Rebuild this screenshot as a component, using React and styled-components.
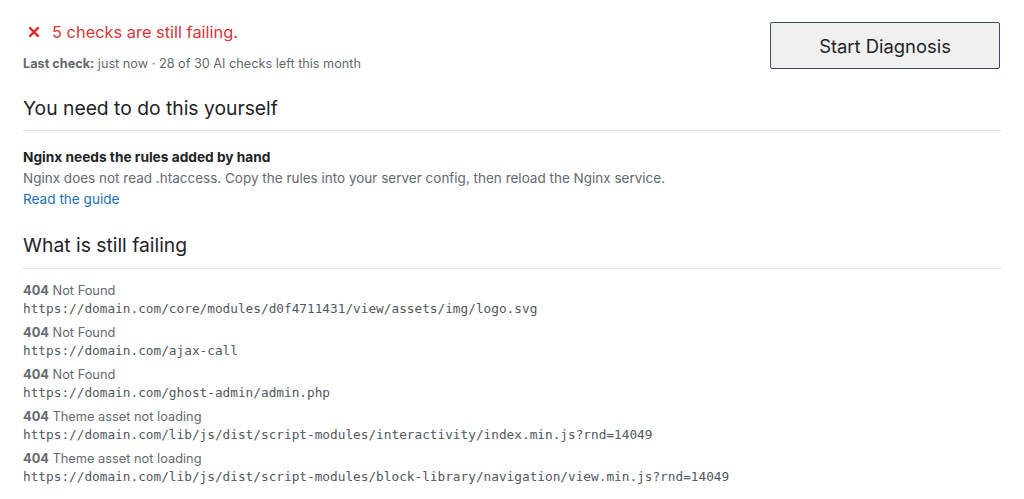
import React from "react";
import styled, { createGlobalStyle } from "styled-components";

const Global = createGlobalStyle`
  html, body { margin: 0; padding: 0; background: #fff; }
  body { font-family: Inter, "Liberation Sans", Arial, sans-serif; color: #1d2327; -webkit-font-smoothing: antialiased; }
`;

const Page = styled.div`
  padding: 21px 23px 0 23px;
  width: 978px;
`;

const Header = styled.div`
  display: flex;
  justify-content: space-between;
  align-items: flex-start;
`;

const StatusBlock = styled.div`
  display: flex;
  flex-direction: column;
`;

const StatusTitle = styled.div`
  display: flex;
  align-items: center;
  gap: 12px;
  color: #d63638;
  font-size: 16.4px;
  line-height: 22px;
  padding: 0 0 0 5px;
`;

const Meta = styled.div`
  margin-top: 13px;
  font-size: 12.7px;
  line-height: 16px;
  color: #646970;
  b { font-weight: 700; }
`;

const Button = styled.button`
  width: 230px;
  height: 47px;
  margin-top: 1px;
  margin-right: 1px;
  background: #f0f0f1;
  border: 1px solid #3c4a62;
  border-radius: 2px;
  font-family: inherit;
  font-size: 18.4px;
  color: #1d2327;
  cursor: pointer;
`;

const Section = styled.section`
  margin-top: ${(p) => p.$top}px;
`;

const SectionTitle = styled.h2`
  margin: 0;
  font-size: 19.3px;
  font-weight: 400;
  line-height: 24px;
  padding-bottom: ${(p) => p.$pad}px;
  border-bottom: 1px solid #e0e4ea;
`;

const Notice = styled.div`
  margin-top: 16px;
  font-size: 13.5px;
  line-height: 21px;
`;

const NoticeTitle = styled.div`
  font-size: 13.7px;
  font-weight: 700;
  color: #1d2327;
`;

const NoticeText = styled.div`
  color: #646970;
`;

const Link = styled.a`
  color: #2271b1;
  font-size: 13.6px;
  text-decoration: none;
`;

const List = styled.div`
  margin-top: 13px;
  display: flex;
  flex-direction: column;
  gap: 6px;
`;

const Item = styled.div`
  display: flex;
  flex-direction: column;
`;

const Label = styled.div`
  font-size: 12.8px;
  line-height: 18px;
  color: #646970;
  b { font-weight: 700; }
`;

const Url = styled.code`
  font-family: "DejaVu Sans Mono", "Liberation Mono", monospace;
  font-size: 12.75px;
  line-height: 18px;
  color: #50575e;
`;

const XIcon = () => (
  <svg width="12" height="12" viewBox="0 0 12 12">
    <path d="M1.4 1.4 L10.6 10.6 M10.6 1.4 L1.4 10.6" stroke="#d63638" strokeWidth="2.7" strokeLinecap="butt" />
  </svg>
);

const failures = [
  ["Not Found", "https://domain.com/core/modules/d0f4711431/view/assets/img/logo.svg"],
  ["Not Found", "https://domain.com/ajax-call"],
  ["Not Found", "https://domain.com/ghost-admin/admin.php"],
  ["Theme asset not loading", "https://domain.com/lib/js/dist/script-modules/interactivity/index.min.js?rnd=14049"],
  ["Theme asset not loading", "https://domain.com/lib/js/dist/script-modules/block-library/navigation/view.min.js?rnd=14049"],
];

export default function App() {
  return (
    <>
      <Global />
      <Page>
        <Header>
          <StatusBlock>
            <StatusTitle>
              <XIcon />
              <span>5 checks are still failing.</span>
            </StatusTitle>
            <Meta>
              <b>Last check:</b> just now · 28 of 30 AI checks left this month
            </Meta>
          </StatusBlock>
          <Button>Start Diagnosis</Button>
        </Header>

        <Section $top={24}>
          <SectionTitle $pad={10}>You need to do this yourself</SectionTitle>
          <Notice>
            <NoticeTitle>Nginx needs the rules added by hand</NoticeTitle>
            <NoticeText>
              Nginx does not read .htaccess. Copy the rules into your server config, then reload the Nginx service.
            </NoticeText>
            <Link href="#">Read the guide</Link>
          </Notice>
        </Section>

        <Section $top={23}>
          <SectionTitle $pad={11}>What is still failing</SectionTitle>
          <List>
            {failures.map(([msg, url], i) => (
              <Item key={i}>
                <Label>
                  <b>404</b> {msg}
                </Label>
                <Url>{url}</Url>
              </Item>
            ))}
          </List>
        </Section>
      </Page>
    </>
  );
}
